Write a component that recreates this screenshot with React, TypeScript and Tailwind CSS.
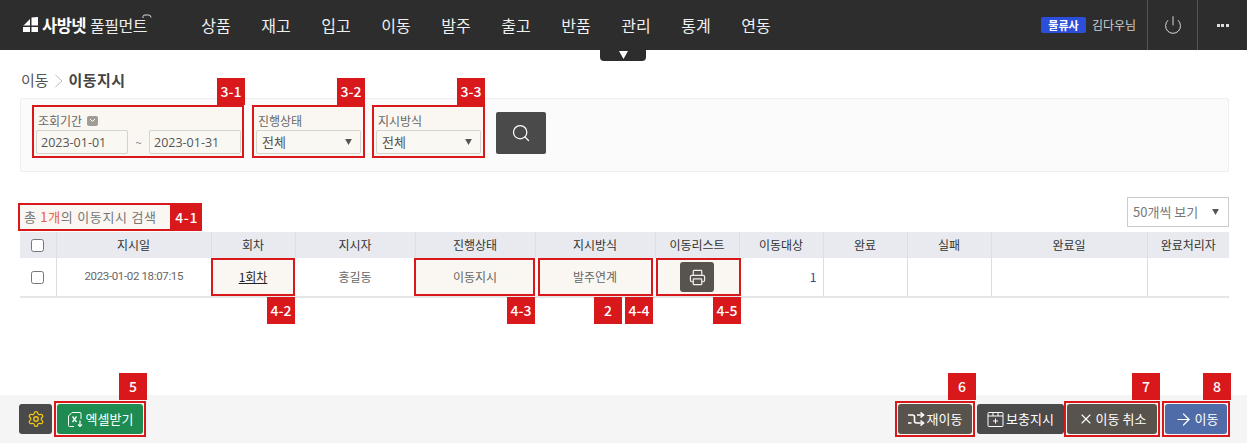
import React from 'react';
import { Power, Printer, Search, Settings, X, ArrowRight } from 'lucide-react';

const menus = ['상품', '재고', '입고', '이동', '발주', '출고', '반품', '관리', '통계', '연동'];

const Tag = ({ label, className }: { label: string; className: string }) => (
  <span className={`absolute z-10 flex h-[27px] items-center justify-center bg-[#d9181c] text-[14px] font-medium text-white ${className}`}>
    {label}
  </span>
);

// red annotation outline, sits behind the content of its wrapper
const Box = ({ className }: { className: string }) => (
  <span className={`absolute -z-10 border-2 border-[#d9181c] bg-[#faf7f2] ${className}`} />
);

const Caret = ({ className = '', size = 7 }: { className?: string; size?: number }) => (
  <svg width={size} height={size - 1} viewBox="0 0 9 8" className={className}>
    <path d="M0 0h9L4.500 8z" fill="currentColor" />
  </svg>
);

const SelectBox = ({ value }: { value: string }) => (
  <div className="flex h-[24px] w-[105px] items-center justify-between rounded-[2px] border border-[#d6d3cd] bg-[#faf8f3] pl-[5px] pr-[8px] text-[13px] text-[#555]">
    <span>{value}</span>
    <Caret className="text-[#555]" />
  </div>
);

const DateInput = ({ value }: { value: string }) => (
  <input
    readOnly
    defaultValue={value}
    className="h-[24px] w-[92px] rounded-[2px] border border-[#d6d3cd] bg-[#faf8f3] px-[4px] font-['Open_Sans',sans-serif] text-[12.500px] text-[#555] outline-none"
  />
);

const Logo = () => (
  <div className="flex items-center text-white">
    <svg width="16" height="16" viewBox="0 0 16 16" className="mr-[3px]">
      <path d="M0 9 7 2v6.500H0zM8.500 0.500 15 0v8.500H8.500zM0 10h7v5H0zM8.500 10H15v5H8.500z" fill="#fff" />
    </svg>
    <span className="text-[16.500px] font-bold tracking-[-0.5px]">사방넷</span>
    <span className="relative ml-[4px] text-[16px] tracking-[-0.5px] text-[#ececec]">
      풀필먼트
      <svg width="10" height="9" viewBox="0 0 10 9" className="absolute -right-[5px] top-[1px]">
        <path d="M1 4V2.500Q1 1 3 1h3.500Q9 1 9 3.500" stroke="#ddd" fill="none" strokeWidth="1" />
      </svg>
    </span>
  </div>
);

const ExcelIcon = () => (
  <svg width="17" height="17" viewBox="0 0 17 17" fill="none" stroke="#fff" strokeWidth="1">
    <path d="M7 15.500H2.500a1 1 0 0 1-1-1V5L5 1.500h8a1 1 0 0 1 1 1V8" />
    <path d="M5.500 5.500 9.500 11M9.500 5.500 5.500 11" strokeWidth="1.300" />
    <path d="M13 9.500V15.500M11 13.500l2 2 2-2" strokeWidth="1.200" />
  </svg>
);

const ReMoveIcon = () => (
  <svg width="17" height="14" viewBox="0 0 17 14" fill="none" stroke="#fff" strokeWidth="1.600">
    <path d="M0 3h4.500c2 0 2 1 2 2v4c0 1 0 2 2 2H15" />
    <path d="M0 11h3.500M9 3h6" />
    <path d="M12.500 0.500 15.500 3l-3 2.500M12.500 8.500l3 2.500-3 2.500" />
  </svg>
);

const BoxPlusIcon = () => (
  <svg width="17" height="17" viewBox="0 0 17 17" fill="none" stroke="#fff" strokeWidth="1">
    <rect x="1" y="1.500" width="15" height="14" rx="1" />
    <path d="M1 5h15M6 1.500V5M11 1.500V5M8.500 7.500v5M6 10h5" />
  </svg>
);

const footBtn = 'flex h-[30px] items-center justify-center gap-[2px] rounded-[3px] text-[13px] text-white';

const App = () => {
  return (
    <div className="flex h-[443px] w-[1247px] flex-col overflow-hidden bg-white font-['Noto_Sans_CJK_KR','Noto_Sans',sans-serif] text-[13px]">
      {/* Header */}
      <header className="relative flex h-[50px] shrink-0 items-center bg-[#2d2d2d]">
        <div className="w-[186px] pl-[23px]">
          <Logo />
        </div>
        <nav className="flex">
          {menus.map((menu) => (
            <a key={menu} className="w-[60px] text-center text-[16px] text-[#f0f0f0]">
              {menu}
            </a>
          ))}
        </nav>
        <div className="ml-auto flex h-full items-center">
          <span className="flex h-[16px] w-[45px] items-center justify-center rounded-[2px] bg-[#2b4fdb] text-[11px] font-bold text-white">
            물류사
          </span>
          <span className="ml-[6px] w-[55px] text-[12px] text-[#cfcfcf]">김다우님</span>
          <div className="flex h-full w-[50px] items-center justify-center border-l border-[#555]">
            <Power size={20} strokeWidth={1.200} className="text-[#d8d8d8]" />
          </div>
          <div className="flex h-full w-[50px] items-center justify-center gap-[1.500px] border-l border-[#555]">
            <span className="h-[3px] w-[3px] bg-[#ddd]" />
            <span className="h-[3px] w-[3px] bg-[#ddd]" />
            <span className="h-[3px] w-[3px] bg-[#ddd]" />
          </div>
        </div>
        <div className="absolute left-[600px] top-[50px] flex h-[11px] w-[46px] items-start justify-center rounded-b-[4px] bg-[#2d2d2d] pt-[1px] text-white">
          <Caret size={9} />
        </div>
      </header>

      {/* Content */}
      <main className="flex-1 pl-[20px] pr-[18px]">
        <div className="flex h-[48px] items-end pb-[7px] pl-[1px] text-[15px] leading-[22px] text-[#555]">
          <span>이동</span>
          <svg width="10" height="14" viewBox="0 0 10 14" className="mx-[5px] mb-[3px]">
            <path d="M1.500 1 8 7l-6.500 6" fill="none" stroke="#bbb" />
          </svg>
          <b className="font-bold tracking-[0.4px] text-[#444]">이동지시</b>
        </div>

        <section className="flex h-[74px] items-start gap-[15px] rounded-[2px] border border-[#eee] bg-[#fbfbfb] pl-[15px] pt-[13px]">
          <div className="relative isolate">
            <Box className="-bottom-[4px] -left-[4px] -right-[3px] -top-[7px]" />
            <Tag label="3-1" className="-right-[4px] -top-[34px] w-[28px]" />
            <div className="mb-[1px] flex h-[17px] items-center gap-[5px] pl-[2px] text-[12px] text-[#666]">
              조회기간
              <span className="flex h-[10px] w-[11px] items-center justify-center rounded-[2px] bg-[#a09c96] text-white">
                <svg width="7" height="5" viewBox="0 0 7 5"><path d="M1 1l2.500 2.500L6 1" fill="none" stroke="#fff" /></svg>
              </span>
            </div>
            <div className="flex items-center">
              <DateInput value="2023-01-01" />
              <span className="w-[21px] text-center text-[11px] text-[#777]">~</span>
              <DateInput value="2023-01-31" />
            </div>
          </div>

          <div className="relative isolate">
            <Box className="-bottom-[4px] -left-[4px] -right-[4px] -top-[7px]" />
            <Tag label="3-2" className="-right-[4px] -top-[34px] w-[28px]" />
            <div className="mb-[1px] flex h-[17px] items-center pl-[2px] text-[12px] text-[#666]">진행상태</div>
            <SelectBox value="전체" />
          </div>

          <div className="relative isolate">
            <Box className="-bottom-[4px] -left-[4px] -right-[4px] -top-[7px]" />
            <Tag label="3-3" className="-right-[4px] -top-[34px] w-[28px]" />
            <div className="mb-[1px] flex h-[17px] items-center pl-[2px] text-[12px] text-[#666]">지시방식</div>
            <SelectBox value="전체" />
          </div>

          <button className="flex h-[42px] w-[50px] items-center justify-center rounded-[2px] bg-[#4a4a4a] text-white">
            <Search size={20} strokeWidth={1.500} />
          </button>
        </section>

        <div className="flex h-[60px] items-start justify-between">
          <div className="relative isolate ml-[4px] mt-[33px] flex h-[24px] items-center text-[13px] tracking-[0.7px] text-[#777]">
            <Box className="-bottom-[2px] -left-[6px] -right-[15px] -top-[2px]" />
            <Tag label="4-1" className="-right-[45px] -top-[2px] !h-[28px] w-[30px]" />
            <span>
              총 <span className="text-[#e8603c]">1개</span>의 이동지시 검색
            </span>
          </div>
          <div className="mt-[25px] flex h-[30px] w-[102px] items-center justify-between border border-[#ccc] pl-[5px] pr-[9px] text-[13px] text-[#777]">
            <span>50개씩 보기</span>
            <Caret className="text-[#555]" />
          </div>
        </div>

        {/* Table */}
        <table className="w-[1209px] table-fixed border-collapse text-center text-[12px]">
          <colgroup>
            <col className="w-[36px]" />
            <col className="w-[155px]" />
            <col className="w-[84px]" />
            <col className="w-[120px]" />
            <col className="w-[120px]" />
            <col className="w-[120px]" />
            <col className="w-[84px]" />
            <col className="w-[84px]" />
            <col className="w-[84px]" />
            <col className="w-[84px]" />
            <col className="w-[156px]" />
            <col className="w-[82px]" />
          </colgroup>
          <thead>
            <tr className="h-[26px] bg-[#e8eaef] text-[#333]">
              <th className="border-l-0 font-normal">
                <input type="checkbox" className="mx-auto block h-[13px] w-[13px]" />
              </th>
              {['지시일', '회차', '지시자', '진행상태', '지시방식', '이동리스트', '이동대상', '완료', '실패', '완료일', '완료처리자'].map((title) => (
                <th key={title} className="border-l border-[#dcdee3] font-normal">
                  {title}
                </th>
              ))}
            </tr>
          </thead>
          <tbody>
            <tr className="h-[39px] border-b-2 border-[#e6e6e6] text-[#666]">
              <td>
                <input type="checkbox" className="mx-auto block h-[13px] w-[13px]" />
              </td>
              <td className="border-l border-[#ddd] font-['Roboto',sans-serif] text-[11.500px] tracking-[-0.35px]">2023-01-02 18:07:15</td>
              <td className="relative isolate">
                <Box className="inset-0" />
                <Tag label="4-2" className="-bottom-[28px] right-0 w-[28px]" />
                <a className="text-[#222] underline">1회차</a>
              </td>
              <td>홍길동</td>
              <td className="relative isolate">
                <Box className="inset-y-0 -left-px right-0" />
                <Tag label="4-3" className="-bottom-[28px] right-0 w-[28px]" />
                이동지시
              </td>
              <td className="relative isolate">
                <Box className="inset-y-0 left-[3px] right-[2px]" />
                <Tag label="2" className="-bottom-[28px] right-[33px] w-[28px]" />
                <Tag label="4-4" className="-bottom-[28px] right-[2px] w-[28px]" />
                발주연계
              </td>
              <td className="relative isolate">
                <Box className="inset-y-0 left-px -right-[2px]" />
                <Tag label="4-5" className="-bottom-[28px] -right-[2px] w-[28px]" />
                <button className="mx-auto flex h-[30px] w-[34px] items-center justify-center rounded-[3px] bg-[#59534d] text-[#eee]">
                  <Printer size={17} strokeWidth={1.700} />
                </button>
              </td>
              <td className="pr-[6px] text-right text-[#2b4a8c]">1</td>
              <td className="border-l border-[#ddd]" />
              <td className="border-l border-[#ddd]" />
              <td className="border-l border-[#ddd]" />
              <td className="border-l border-[#ddd]" />
            </tr>
          </tbody>
        </table>
      </main>

      {/* Footer */}
      <footer className="flex h-[48px] shrink-0 items-center justify-between bg-[#f5f5f5] pl-[19px] pr-[20px]">
        <div className="flex items-center gap-[5px]">
          <button className="flex h-[30px] w-[33px] items-center justify-center rounded-[3px] bg-[#4a4a4a] text-[#f2c811]">
            <Settings size={18} strokeWidth={1.700} />
          </button>
          <div className="relative isolate">
            <Box className="-inset-[3px]" />
            <Tag label="5" className="-right-[4px] -top-[31px] w-[28px]" />
            <button className={`${footBtn} w-[86px] bg-[#1e8c50]`}>
              <ExcelIcon />
              엑셀받기
            </button>
          </div>
        </div>
        <div className="flex items-center">
          <div className="relative isolate">
            <Box className="-inset-[3px]" />
            <Tag label="6" className="-right-[4px] -top-[31px] w-[28px]" />
            <button className={`${footBtn} w-[74px] bg-[#59534d]`}>
              <ReMoveIcon />
              재이동
            </button>
          </div>
          <button className={`${footBtn} ml-[5px] w-[87px] bg-[#4a4a4a]`}>
            <BoxPlusIcon />
            보충지시
          </button>
          <div className="relative isolate ml-[3px]">
            <Box className="-inset-[3px]" />
            <Tag label="7" className="-right-[3px] -top-[31px] w-[28px]" />
            <button className={`${footBtn} w-[90px] bg-[#59534d]`}>
              <X size={16} strokeWidth={1.600} />
              이동 취소
            </button>
          </div>
          <div className="relative isolate ml-[8px]">
            <Box className="-inset-[3px]" />
            <Tag label="8" className="-right-[4px] -top-[31px] w-[28px]" />
            <button className={`${footBtn} w-[62px] bg-[#4f6ba8]`}>
              <ArrowRight size={19} strokeWidth={1.500} />
              이동
            </button>
          </div>
        </div>
      </footer>
    </div>
  );
};

export default App;
